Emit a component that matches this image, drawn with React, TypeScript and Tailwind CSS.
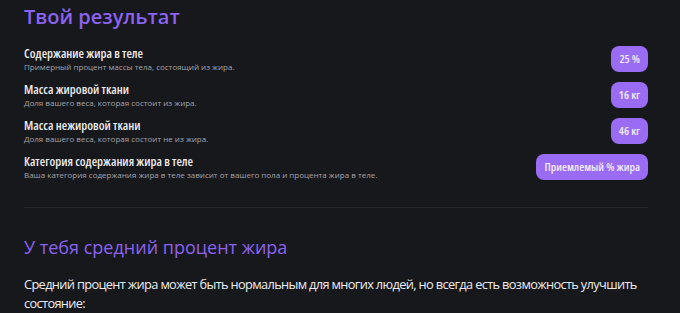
import React from 'react'

const rows = [
  {
    title: 'Содержание жира в теле',
    desc: 'Примерный процент массы тела, состоящий из жира.',
    value: '25 %',
  },
  {
    title: 'Масса жировой ткани',
    desc: 'Доля вашего веса, которая состоит из жира.',
    value: '16 кг',
  },
  {
    title: 'Масса нежировой ткани',
    desc: 'Доля вашего веса, которая состоит не из жира.',
    value: '46 кг',
  },
  {
    title: 'Категория содержания жира в теле',
    desc: 'Ваша категория содержания жира в теле зависит от вашего пола и процента жира в теле.',
    value: 'Приемлемый % жира',
  },
]

const App = () => (
  <main className="min-h-screen bg-[#17181c] font-['Open_Sans',sans-serif] text-[#e6e6e8]">
    <section className="pl-6 pr-8 pt-[3px]">
      <h2 className="text-[20px] font-semibold leading-[28px] text-[#8b63f2]">Твой результат</h2>

      <div className="mt-[15px] flex flex-col gap-[10px]">
        {rows.map((r) => (
          <div key={r.title} className="flex items-center justify-between">
            <div>
              <h4 className="font-stretch-[87.5%] text-[12.5px] font-semibold leading-[15px] text-[#ececef]">{r.title}</h4>
              <p className="text-[8px] leading-[11px] text-[#a3a3aa]">{r.desc}</p>
            </div>
            <span className="rounded-lg bg-[#9a6cf3] px-[8px] py-[6px] font-stretch-[87.5%] text-[11.5px] font-semibold leading-[14px] text-[#f1ecfd]">
              {r.value}
            </span>
          </div>
        ))}
      </div>

      <hr className="mt-[27px] border-t border-[#26272c]" />

      <h3 className="mt-[26px] text-[18px] font-medium leading-[26px] text-[#8b63f2]">
        У тебя средний процент жира
      </h3>
      <p className="mt-[15px] text-[12.8px] leading-[19px] tracking-[-0.65px] text-[#ececef]">
        Средний процент жира может быть нормальным для многих людей, но всегда есть возможность улучшить
        состояние:
      </p>
    </section>
  </main>
)

export default App
